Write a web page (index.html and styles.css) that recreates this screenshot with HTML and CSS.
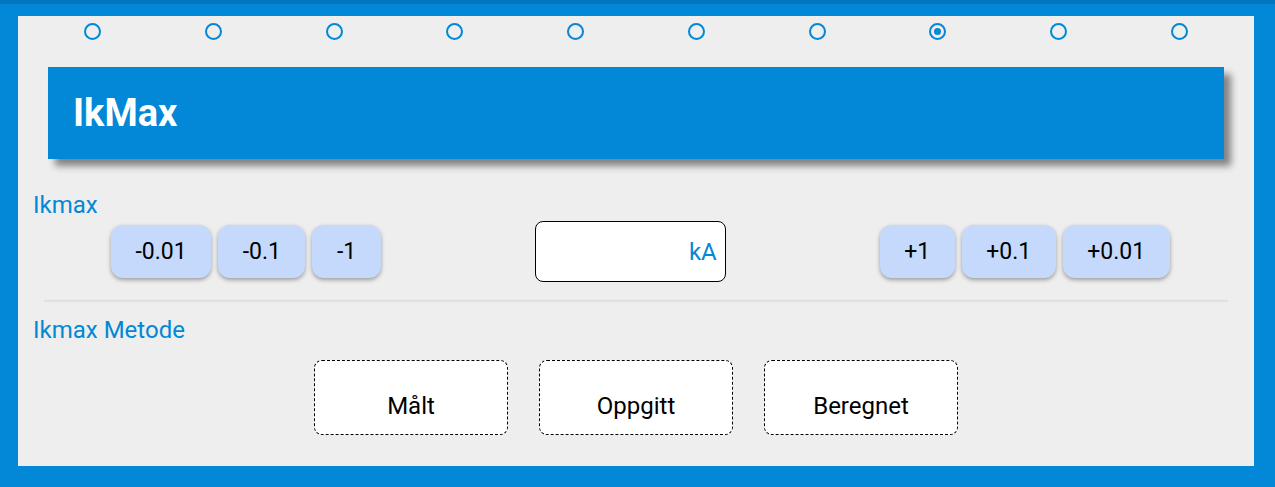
FILE: index.html
```html
<!DOCTYPE html>
<html lang="no">
<head>
  <meta charset="UTF-8" />
  <title>IkMax</title>
  <link rel="stylesheet" href="styles.css">
</head>
<body>
  <div class="panel">
    <div class="steps">
      <span class="step"></span>
      <span class="step"></span>
      <span class="step"></span>
      <span class="step"></span>
      <span class="step"></span>
      <span class="step"></span>
      <span class="step"></span>
      <span class="step active"></span>
      <span class="step"></span>
      <span class="step"></span>
    </div>

    <div class="title-bar">
      <h1>IkMax</h1>
    </div>

    <div class="field-label">Ikmax</div>
    <div class="stepper">
      <div class="btn-group">
        <button class="step-btn">-0.01</button>
        <button class="step-btn">-0.1</button>
        <button class="step-btn">-1</button>
      </div>
      <div class="value-box">
        <span class="unit">kA</span>
      </div>
      <div class="btn-group">
        <button class="step-btn">+1</button>
        <button class="step-btn">+0.1</button>
        <button class="step-btn">+0.01</button>
      </div>
    </div>

    <hr class="divider" />

    <div class="field-label second">Ikmax Metode</div>
    <div class="choices">
      <div class="choice">Målt</div>
      <div class="choice">Oppgitt</div>
      <div class="choice">Beregnet</div>
    </div>
  </div>
</body>
</html>
```

FILE: styles.css
```css
body {
  font-family: Roboto, "Liberation Sans", sans-serif;
  margin: 0;
  padding: 12px 21px 21px 18px;
  background: #0288d6;
  border-top: 4px solid #0277bd;
  color: #000;
}
.panel {
  background: #eeeeee;
  height: 443px;
  padding-top: 7px;
}
.steps {
  display: flex;
  justify-content: space-between;
  padding: 0 66px 0 66px;
}
.step {
  width: 13px;
  height: 13px;
  border: 2px solid #0288d6;
  border-radius: 50%;
  position: relative;
}
.step.active::after {
  content: "";
  position: absolute;
  left: 3px;
  top: 3px;
  width: 7px;
  height: 7px;
  border-radius: 50%;
  background: #0288d6;
}
.title-bar {
  margin: 27px 30px 0 30px;
  height: 92px;
  background: #0288d6;
  box-shadow: 7px 7px 7px rgba(0,0,0,0.45);
  display: flex;
  align-items: center;
  padding-left: 25px;
}
.title-bar h1 {
  margin: 0;
  color: #fff;
  font-size: 38px;
  font-weight: bold;
}
.field-label {
  margin: 32px 0 0 15px;
  font-size: 24px;
  line-height: 28px;
  color: #0288d6;
}
.field-label.second {
  margin-top: 15px;
}
.stepper {
  margin-top: 2px;
  padding-left: 93px;
  display: flex;
  align-items: center;
  gap: 154px;
}
.btn-group {
  display: flex;
  gap: 7px;
}
.step-btn {
  font-family: Roboto, "Liberation Sans", sans-serif;
  font-size: 23px;
  height: 53px;
  padding: 0 24.5px;
  border: none;
  border-radius: 12px;
  background: #c5d9fc;
  color: #000;
  box-shadow: 0 2px 4px rgba(0,0,0,0.35);
}
.value-box {
  width: 191px;
  height: 61px;
  box-sizing: border-box;
  background: #fff;
  border: 1px solid #000;
  border-radius: 8px;
  display: flex;
  align-items: center;
  justify-content: flex-end;
  padding-right: 8px;
}
.unit {
  font-size: 24px;
  color: #0288d6;
}
.divider {
  margin: 18px 26px 0 26px;
  border: none;
  height: 1px;
  background: #dcdcdc;
  box-shadow: 0 1px 2px rgba(0,0,0,0.08);
}
.choices {
  margin-top: 16px;
  display: flex;
  justify-content: center;
  gap: 31px;
}
.choice {
  width: 192px;
  height: 57px;
  padding-top: 16px;
  background: #fff;
  border: 1px dashed #000;
  border-radius: 8px;
  display: flex;
  align-items: center;
  justify-content: center;
  font-size: 24px;
}
```
